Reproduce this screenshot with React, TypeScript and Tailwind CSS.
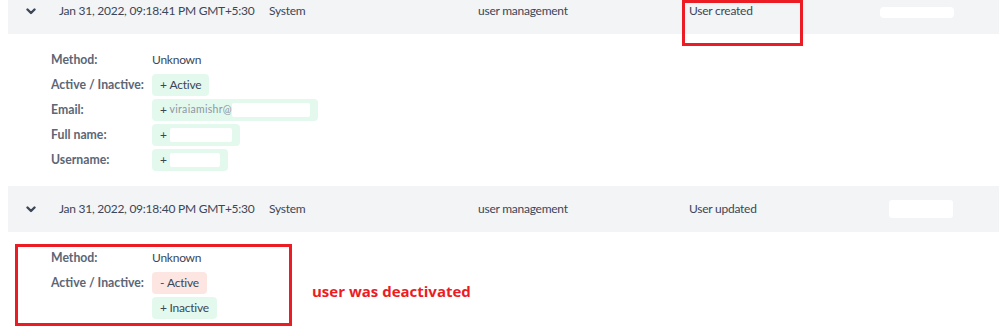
import React from 'react';

type Change = { sign: '+' | '-'; text?: string; blank?: number; faint?: string };
type Field = { label: string; plain?: string; changes?: Change[] };

const Chevron = () => (
  <svg width="10" height="7" viewBox="0 0 10 7" className="text-[#3d4756]">
    <polyline points="1.5,1.5 5,5 8.5,1.5" fill="none" stroke="currentColor" strokeWidth="2.4" strokeLinecap="round" strokeLinejoin="round" />
  </svg>
);

const LogRow = ({ date, action, redactClass }: { date: string; action: string; redactClass: string }) => (
  <div className="ml-2 h-[46px] bg-[#f3f4f6] flex items-center whitespace-nowrap">
    <div className="w-[51px] flex pl-[18px]">
      <Chevron />
    </div>
    <div className="w-[210px]">{date}</div>
    <div className="w-[209px]">System</div>
    <div className="w-[211px]">user management</div>
    <div className="w-[191px]">{action}</div>
    <div className="relative h-full flex-1">
      <div className={redactClass} />
    </div>
  </div>
);

const Badge = ({ c }: { c: Change }) => (
  <div
    className={
      'h-[22px] rounded-[4px] px-2 flex items-center whitespace-nowrap ' +
      (c.sign === '+' ? 'bg-[#e3f9ee]' : 'bg-[#fde6e1]')
    }
  >
    <span>{c.sign}&nbsp;</span>
    {c.text && <span>{c.text}</span>}
    {c.faint && <span className="text-[#8d96a2] text-[10.5px] tracking-[0.3px]">{c.faint}</span>}
    {c.blank !== undefined && <span className="inline-block h-[14px] bg-white rounded-[2px]" style={{ width: c.blank }} />}
  </div>
);

const Details = ({ fields }: { fields: Field[] }) => (
  <div className="pl-[51px] flex flex-col gap-[3px]">
    {fields.map((f) => (
      <div key={f.label} className="flex items-start">
        <div className="w-[101px] h-[22px] flex items-center font-bold text-[12.25px] tracking-normal text-[#5b6676]">{f.label}</div>
        {f.plain ? (
          <div className="h-[22px] flex items-center">{f.plain}</div>
        ) : (
          <div className="flex flex-col items-start gap-[3px]">
            {f.changes!.map((c, i) => (
              <Badge key={i} c={c} />
            ))}
          </div>
        )}
      </div>
    ))}
  </div>
);

export default function App() {
  return (
    <div className="relative w-[999px] h-[329px] overflow-hidden bg-white text-[12px] tracking-[-0.25px] text-[#3b4656] font-['Lato','Noto_Sans',sans-serif]">
      <div className="-mt-3">
        <LogRow
          date="Jan 31, 2022, 09:18:41 PM GMT+5:30"
          action="User created"
          redactClass="absolute left-[0px] top-[19px] w-[74px] h-[11px] bg-white rounded-[4px]"
        />
        <div className="pt-[15px]">
          <Details
            fields={[
              { label: 'Method:', plain: 'Unknown' },
              { label: 'Active / Inactive:', changes: [{ sign: '+', text: 'Active' }] },
              { label: 'Email:', changes: [{ sign: '+', faint: 'viraiamishr@', blank: 78 }] },
              { label: 'Full name:', changes: [{ sign: '+', blank: 62 }] },
              { label: 'Username:', changes: [{ sign: '+', blank: 50 }] },
            ]}
          />
        </div>
        <div className="mt-[15px]">
          <LogRow
            date="Jan 31, 2022, 09:18:40 PM GMT+5:30"
            action="User updated"
            redactClass="absolute left-[9px] top-[14px] w-[64px] h-[18px] bg-white rounded-[3px]"
          />
        </div>
        <div className="pt-[15px]">
          <Details
            fields={[
              { label: 'Method:', plain: 'Unknown' },
              {
                label: 'Active / Inactive:',
                changes: [
                  { sign: '-', text: 'Active' },
                  { sign: '+', text: 'Inactive' },
                ],
              },
            ]}
          />
        </div>
      </div>

      {/* annotation boxes */}
      <div className="absolute left-[682px] top-0 w-[121px] h-[46px] border-[3px] border-[#ec1c24]" />
      <div className="absolute left-[15px] top-[244px] w-[277px] h-[82px] border-[3px] border-[#ec1c24]" />
      <div className="absolute left-[312px] top-[280px] text-[15px] tracking-normal font-bold text-[#ec1c24] leading-[22px] font-['Open_Sans',sans-serif]">user was deactivated</div>
    </div>
  );
}
